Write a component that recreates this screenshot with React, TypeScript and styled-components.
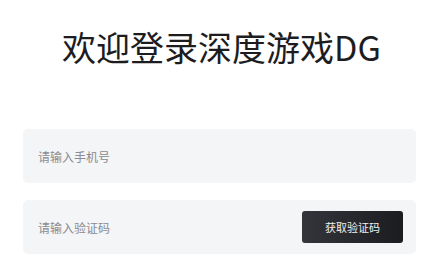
import React from "react";
import styled, { createGlobalStyle } from "styled-components";

const Global = createGlobalStyle`
  html, body { margin: 0; padding: 0; background: #ffffff; }
  body { font-family: "Noto Sans CJK SC", "Noto Sans", sans-serif; }
`;

const Page = styled.div`
  width: 432px;
  height: 257px;
  box-sizing: border-box;
  padding: 24px 16px 0 23px;
  display: flex;
  flex-direction: column;
  overflow: hidden;
`;

const Title = styled.h1`
  margin: 0;
  height: 46px;
  line-height: 46px;
  text-align: center;
  font-size: 34px;
  font-weight: 400;
  color: #1d1d1f;
  padding-left: 4px;
  font-family: "Noto Sans CJK SC", "Noto Sans", sans-serif;
`;

const Form = styled.div`
  margin-top: 59px;
  display: flex;
  flex-direction: column;
  gap: 17px;
`;

const Field = styled.div`
  height: 54px;
  box-sizing: border-box;
  background: #f4f5f7;
  border-radius: 5px;
  display: flex;
  align-items: center;
  padding: 0 13px 0 15px;
`;

const Input = styled.input`
  flex: 1;
  min-width: 0;
  border: none;
  outline: none;
  background: transparent;
  font-size: 12px;
  color: #333;
  padding: 0;
  font-family: "Noto Sans CJK SC", "Noto Sans", sans-serif;
  &::placeholder { color: #8a8b8f; }
`;

const CodeButton = styled.button`
  width: 101px;
  height: 32px;
  border: none;
  border-radius: 3px;
  background: linear-gradient(90deg, #33353b 0%, #1b1c20 100%);
  color: #f2f2f2;
  font-size: 11px;
  font-family: "Noto Sans CJK SC", "Noto Sans", sans-serif;
  cursor: pointer;
  padding: 0;
`;

export default function App() {
  return (
    <>
      <Global />
      <Page>
        <Title>欢迎登录深度游戏DG</Title>
        <Form>
          <Field>
            <Input placeholder="请输入手机号" />
          </Field>
          <Field>
            <Input placeholder="请输入验证码" />
            <CodeButton>获取验证码</CodeButton>
          </Field>
        </Form>
      </Page>
    </>
  );
}
